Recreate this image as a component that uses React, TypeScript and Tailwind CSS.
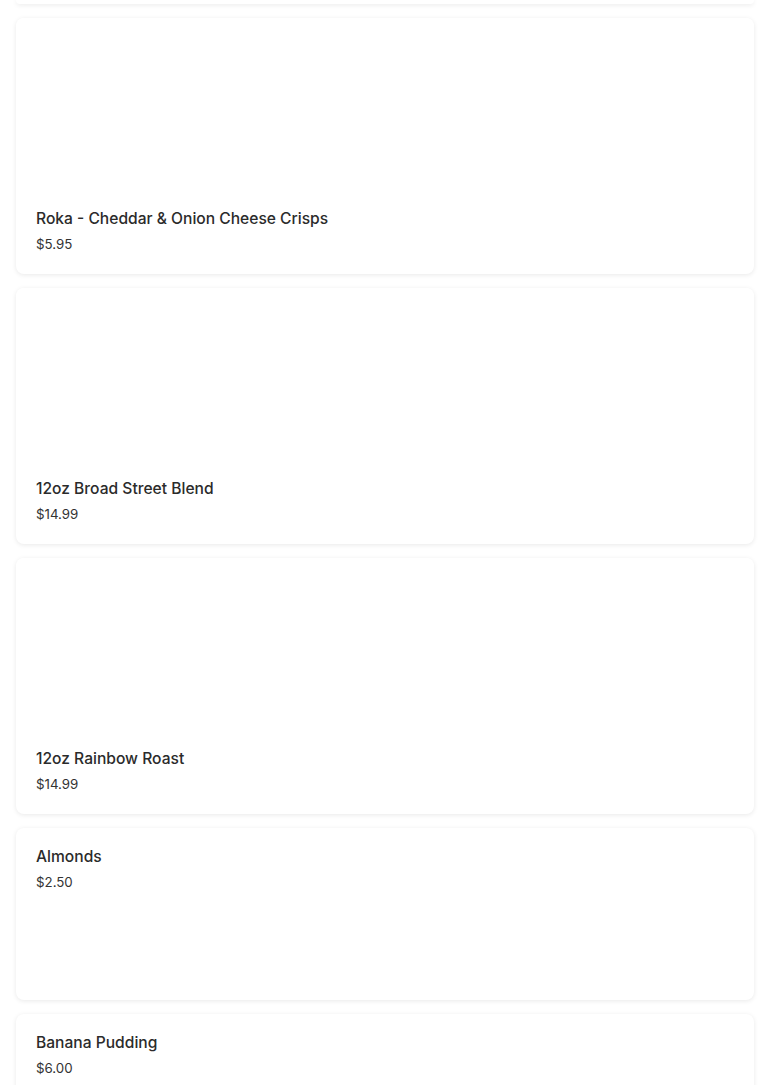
import React from 'react';

type Item = { name: string; price: string; image: boolean };

const items: Item[] = [
  { name: 'Roka - Cheddar & Onion Cheese Crisps', price: '$5.95', image: true },
  { name: '12oz Broad Street Blend', price: '$14.99', image: true },
  { name: '12oz Rainbow Roast', price: '$14.99', image: true },
  { name: 'Almonds', price: '$2.50', image: false },
  { name: 'Banana Pudding', price: '$6.00', image: false },
];

function ItemCard({ item }: { item: Item }) {
  return (
    <div className="bg-white rounded-lg shadow-[0_1px_5px_rgba(0,0,0,0.09)] min-h-[172px] overflow-hidden">
      {item.image && <div className="h-[172px] bg-white" />}
      <div className="px-5 pt-[19px] pb-5">
        <p className="text-[15.6px] leading-5 font-medium text-[#2b2b2b]">{item.name}</p>
        <p className="mt-[5px] text-[13.3px] leading-5 text-[#333]">{item.price}</p>
      </div>
    </div>
  );
}

export default function App() {
  return (
    <div className="min-h-screen bg-white px-4 font-['Inter',sans-serif]">
      <div className="flex flex-col gap-[14px]">
        {/* tail of the card above the fold */}
        <div className="h-[4px] bg-white rounded-b-lg shadow-[0_1px_5px_rgba(0,0,0,0.09)]" />
        {items.map((item) => (
          <ItemCard key={item.name} item={item} />
        ))}
      </div>
    </div>
  );
}
